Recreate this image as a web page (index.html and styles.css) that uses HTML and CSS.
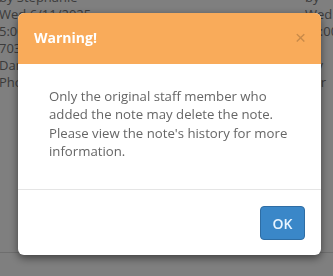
FILE: index.html
```html
<!DOCTYPE html>
<html lang="en">
<head>
  <meta charset="UTF-8">
  <title>Warning</title>
  <link rel="stylesheet" href="styles.css">
</head>
<body>

  <div class="page">
    <div class="col col-left">
      <div>by Stephanie</div>
      <div>Wed 6/11/2025</div>
      <div>5:00 PM</div>
      <div>7035 Main St</div>
      <div>Daniel Ortiz</div>
      <div>Phone call</div>
    </div>
    <div class="col col-right">
      <div>by</div>
      <div>Wed</div>
      <div>10:00</div>
      <div>3 <span class="link">I</span></div>
      <div>Inv</div>
      <div>Por</div>
    </div>
    <div class="rule"></div>
  </div>

  <div class="backdrop"></div>

  <div class="modal">
    <div class="modal-header">
      <h4 class="modal-title">Warning!</h4>
      <button type="button" class="close">&times;</button>
    </div>
    <div class="modal-body">
      <p>Only the original staff member who added the note may delete the note. Please view the note's history for more information.</p>
    </div>
    <div class="modal-footer">
      <button type="button" class="ok-button">OK</button>
    </div>
  </div>

</body>
</html>
```

FILE: styles.css
```css
html, body {
  margin: 0;
  height: 100%;
}
body {
  font-family: "Open Sans", Arial, sans-serif;
  background-color: #fff;
  overflow: hidden;
}
.page {
  position: relative;
  height: 100%;
  display: flex;
  justify-content: space-between;
  font-size: 13px;
  line-height: 17px;
  color: #777;
}
.col {
  margin-top: -11px;
  white-space: nowrap;
}
.col-left {
  margin-left: -1px;
}
.col-right {
  width: 28px;
  overflow: hidden;
}
.link {
  color: #3a3a8a;
}
.rule {
  position: absolute;
  left: 0;
  right: 0;
  top: 252px;
  border-top: 1px solid #ddd;
}
.backdrop {
  position: fixed;
  inset: 0;
  background-color: rgba(0, 0, 0, 0.5);
}
.modal {
  position: fixed;
  top: 13px;
  left: 18px;
  width: 303px;
  background-color: #fff;
  border-radius: 6px;
  box-shadow: 0 3px 9px rgba(0, 0, 0, 0.5);
  overflow: hidden;
}
.modal-header {
  display: flex;
  align-items: center;
  justify-content: space-between;
  height: 51px;
  box-sizing: border-box;
  padding: 0 15px 3px 16px;
  background-color: #f9ab5a;
}
.modal-title {
  margin: 0;
  font-size: 14px;
  font-weight: bold;
  color: #fff;
}
.close {
  padding: 0;
  border: none;
  background: none;
  font-family: Arial, sans-serif;
  font-size: 19px;
  line-height: 1;
  color: #c98a49;
  cursor: pointer;
}
.modal-body {
  padding: 23px 30px 29px 31px;
  border-bottom: 1px solid #e5e5e5;
}
.modal-body p {
  margin: 0;
  font-size: 13.2px;
  line-height: 18.3px;
  color: #666;
}
.modal-footer {
  display: flex;
  justify-content: flex-end;
  padding: 16px 16px 15px;
}
.ok-button {
  width: 45px;
  height: 34px;
  padding: 0;
  font-family: "Open Sans", Arial, sans-serif;
  font-size: 14px;
  font-weight: 600;
  color: #e8f4ff;
  background-color: #3a87c8;
  border: 1px solid #2e6da4;
  border-radius: 4px;
  cursor: pointer;
}
```
